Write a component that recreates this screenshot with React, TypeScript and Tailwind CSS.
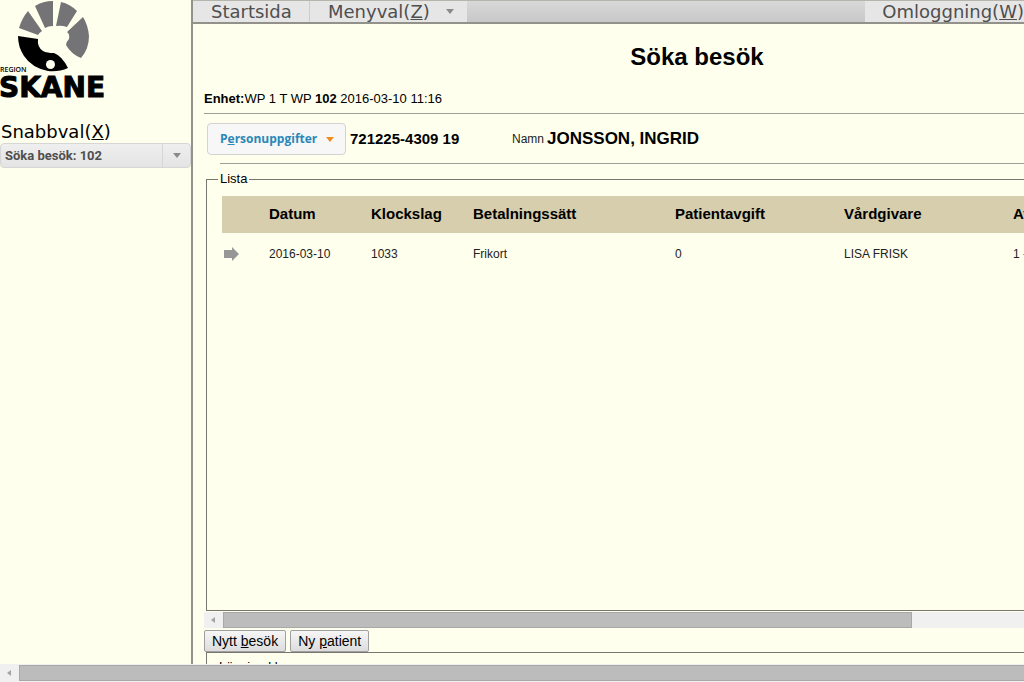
import type { ReactNode } from 'react'

const COLUMNS = [
  { label: 'Datum', value: '2016-03-10', width: 'w-[102px]' },
  { label: 'Klockslag', value: '1033', width: 'w-[102px]' },
  { label: 'Betalningssätt', value: 'Frikort', width: 'w-[202px]' },
  { label: 'Patientavgift', value: '0', width: 'w-[169px]' },
  { label: 'Vårdgivare', value: 'LISA FRISK', width: 'w-[169px]' },
  { label: 'Avdelning', value: '1 - 102', width: 'w-[200px]' },
]

function Logo() {
  return (
    <svg viewBox="0 0 106 99" className="block w-[106px] h-[99px] overflow-visible" role="img" aria-label="Region Skåne">
      <g fill="#747476">
        <path d="M28 11 L42 31 Q39 33 38 35 L19 28 Q22 18 28 11Z" />
        <path d="M35 6 Q43 1 53 1 L53 26 Q48 26 45 28Z" />
        <path d="M61 2 Q70 4 77 11 L67 27 Q61 25 56 26Z" />
        <path d="M83 17 Q88 25 89 36 Q89 49 81 58 Q71 54 66 45 Q66 42 69 39 Q70 34 67 32Z" />
      </g>
      <path d="M18 36 L38 39 Q37 47 43 51 Q47 53 54 53 Q62 56 68 68 Q59 72 48 71 Q32 68 24 56 Q18 47 18 36Z" fill="#000" />
      <circle cx="50.500" cy="64.500" r="4.500" fill="#ffffee" />
      <text x="0" y="72" fontSize="7" fontWeight="600" fontFamily="Open Sans, sans-serif">REGION</text>
      <text x="-1" y="97" fontSize="28" fontWeight="700" fontFamily="DejaVu Sans, sans-serif" stroke="#000" strokeWidth="1">SKANE</text>
    </svg>
  )
}

function Caret({ className }: { className: string }) {
  return (
    <svg viewBox="0 0 8 5" className={`w-2 h-[5px] shrink-0 ${className}`} aria-hidden="true">
      <path d="M0 0H8L4 5Z" fill="currentColor" />
    </svg>
  )
}

function ScrollLeft() {
  return (
    <button aria-label="Rulla åt vänster" className="w-[18px] shrink-0 flex items-center justify-center text-[#a3a3a3]">
      <svg viewBox="0 0 4 6" className="w-1 h-[6px]" aria-hidden="true">
        <path d="M4 0V6L0 3Z" fill="currentColor" />
      </svg>
    </button>
  )
}

function FormButton({ children }: { children: ReactNode }) {
  return (
    <button className="h-[22px] px-[7px] border border-[#a0a0a0] rounded-xs bg-linear-to-b from-[#f6f6f6] to-[#dddddd] text-sm leading-5">
      {children}
    </button>
  )
}

function Sidebar() {
  return (
    <aside className="w-[191px] shrink-0">
      <Logo />
      <h2 className="mt-[22px] pl-px font-['DejaVu_Sans',sans-serif] text-lg leading-[22px]">
        Snabbval(<u>X</u>)
      </h2>
      <button className="w-full h-[25px] flex items-center border border-[#d6d6d6] rounded-sm bg-linear-to-b from-[#efefef] to-[#e4e4e4] text-[#4f4f4f]">
        <span className="flex-1 pl-1 text-left text-[13px] font-bold font-[Roboto,sans-serif]">Söka besök: 102</span>
        <span className="w-[28px] h-full flex items-center justify-center border-l border-[#d6d6d6]">
          <Caret className="text-[#8a8a8a]" />
        </span>
      </button>
    </aside>
  )
}

function MenuBar() {
  return (
    <nav className="h-6 shrink-0 flex border-t border-b-2 border-t-[#b5b5ac] border-b-[#92928a] bg-linear-to-b from-[#d8d8d8] to-[#c8c8c8] font-['DejaVu_Sans',sans-serif] text-lg leading-[22px] text-[#4f4f4f]">
      <a href="#start" className="w-[117px] pl-[18px] bg-[#e6e6e6] border-r border-[#cccccc]">Startsida</a>
      <a href="#meny" className="w-[157px] pl-[18px] pr-[13px] flex items-center justify-between bg-[#e6e6e6]">
        <span>Menyval(<u>Z</u>)</span>
        <Caret className="text-[#8a8a8a]" />
      </a>
      <a href="#byt" className="ml-auto pl-[17px] bg-[#e6e6e6]">Omloggning(<u>W</u>)</a>
    </nav>
  )
}

function VisitList() {
  return (
    <fieldset className="flex-1 min-w-0 min-h-0 ml-0.5 -mr-px border border-[#777770] pl-[15px] overflow-hidden">
      <legend className="-ml-1 px-0.5 text-[13px] leading-4">Lista</legend>
      <table className="mt-[9px] table-fixed w-[991px] text-left">
        <thead>
          <tr className="h-[37px] bg-[#d6ceac] text-[15px]">
            <th className="w-[47px]" />
            {COLUMNS.map(col => (
              <th key={col.label} className={`${col.width} font-bold`}>{col.label}</th>
            ))}
          </tr>
        </thead>
        <tbody>
          <tr className="h-[41px] text-xs text-[#222222]">
            <td className="pl-0.5">
              <button aria-label="Välj besök" className="block">
                <svg viewBox="0 0 16 14" className="w-4 h-[14px]" aria-hidden="true">
                  <path d="M0 3H8V0L15 7L8 14V11H0Z" fill="#979797" />
                </svg>
              </button>
            </td>
            {COLUMNS.map(col => (
              <td key={col.label}>{col.value}</td>
            ))}
          </tr>
        </tbody>
      </table>
    </fieldset>
  )
}

export default function App() {
  return (
    <div className="h-screen flex flex-col overflow-hidden bg-[#ffffee] text-black font-['Liberation_Sans',Arial,sans-serif]">
      <div className="flex-1 min-h-0 flex">
        <Sidebar />
        <div className="flex-1 min-w-0 flex flex-col border-l-2 border-[#92928a]">
          <MenuBar />
          <main className="flex-1 min-h-0 flex flex-col pl-[11px] overflow-hidden">
            <h1 className="mt-[18px] pl-[166px] w-full text-center text-2xl leading-[30px] font-bold">Söka besök</h1>
            <p className="mt-[19px] text-[13px] leading-4">
              <b>Enhet:</b>WP 1 T WP <b>102</b> 2016-03-10 11:16
            </p>
            <hr className="mt-[6px] border-[#a0a09a]" />
            <div className="mt-[9px] ml-[3px] flex items-center">
              <button className="w-[139px] h-8 pl-3 pr-[11px] flex items-center justify-between border border-[#d3d3d3] rounded-sm bg-[#f7f7f7] text-[#2a87b8] text-xs font-bold font-['Open_Sans',sans-serif]">
                <span>P<u>e</u>rsonuppgifter</span>
                <Caret className="text-[#ee8c22]" />
              </button>
              <b className="ml-1 w-[162px] text-[15px]">721225-4309 19</b>
              <span className="text-xs text-[#222222]">Namn</span>
              <b className="ml-[3px] text-[17px] leading-6">JONSSON, INGRID</b>
            </div>
            <hr className="mt-[8px] ml-4 border-[#a0a09a]" />
            <div className="mt-[7px] flex-1 min-h-0 flex flex-col">
              <VisitList />
            </div>
            <div className="mt-px h-4 shrink-0 flex bg-[#f0f0f0]">
              <ScrollLeft />
              <div className="w-[84%] ml-px bg-[#bcbcbc] border border-[#a8a8a8]" />
            </div>
            <div className="mt-[2px] shrink-0 flex gap-1">
              <FormButton>Nytt <u>b</u>esök</FormButton>
              <FormButton>Ny <u>p</u>atient</FormButton>
            </div>
            <div className="h-3 shrink-0 ml-0.5 -mr-px border-t border-l border-[#777770] pl-3 pt-[6px] overflow-hidden text-[13px] leading-4">
              Läsning kl
            </div>
          </main>
        </div>
      </div>
      <div className="h-[18px] shrink-0 flex bg-[#f0f0f0]">
        <ScrollLeft />
        <div className="flex-1 ml-px my-px bg-[#bcbcbc] border border-r-0 border-[#a8a8a8]" />
      </div>
    </div>
  )
}
